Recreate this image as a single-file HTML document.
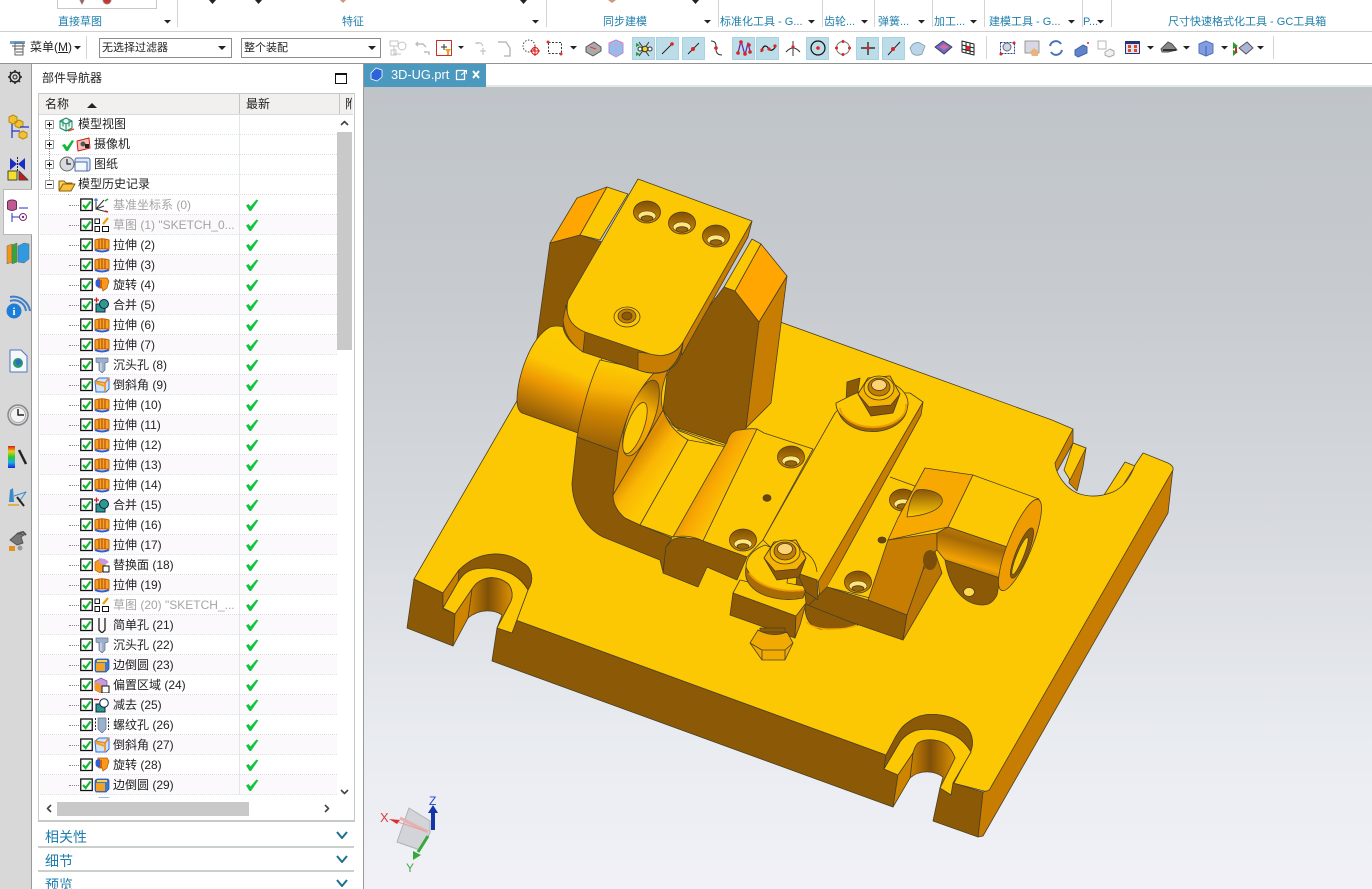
<!DOCTYPE html>
<html><head><meta charset="utf-8"><title>3D-UG</title>
<style>
html,body{margin:0;padding:0;background:#fff}
#p{position:relative;width:1372px;height:889px;overflow:hidden;background:#fff;font:12px "Liberation Sans","Noto Sans CJK SC",sans-serif;color:#222}
#p div,#p span{white-space:nowrap}
.a{position:absolute}
.l{position:absolute;top:15px;font-size:11px;line-height:15px;color:#1f7eab}
#cv{position:absolute;left:364px;top:87px;width:1008px;height:802px;background:linear-gradient(180deg,#bfc4c9 0,#c7cbcf 25%,#d7dade 55%,#e8ebf0 80%,#f1f1f7 100%)}
#lb{position:absolute;left:0;top:64px;width:31px;height:825px;background:#d8d8d8;border-right:1px solid #9a9a9a}
#tree{position:absolute;left:40px;top:195px;width:297px;height:603px;overflow:hidden}
.r{position:relative;height:19px;line-height:20px;border-bottom:1px dotted #e2d8e6;background:#fff}
.r:nth-child(even){background:#fbf9fb;border-bottom-color:#d9e8dc}
.r .c{position:absolute;left:40px;top:3px;width:13px;height:14px}
.r .i{position:absolute;left:54px;top:2px;width:16px;height:16px}
.r .k{position:absolute;left:205px;top:3px;width:14px;height:14px}
.r .d{position:absolute;left:29px;top:10px;width:10px;border-top:1px dotted #888}
.r span{position:absolute;left:73px;top:0}
.r .g{color:#a4a4a4}
.r .s{position:absolute;left:199px;top:0;bottom:-1px;border-left:1px solid #e4e8e4}
.bar{position:absolute;left:38px;width:316px;height:2px;background:#c9cfc9}
.h{position:absolute;left:45px;font-size:14px;line-height:20px;color:#1f7eab}
</style></head><body><div id="p">

<!-- ribbon row -->
<div class="a" style="left:57px;top:-1px;width:98px;height:8px;border:1px solid #c8c8c8"></div>
<div class="a" style="left:0;top:31px;width:1372px;height:1px;background:#cfcfcf"></div>
<div class="a" style="left:0;top:63px;width:1372px;height:1px;background:#8f9493"></div>
<span class="l" style="left:58px">直接草图</span>
<span class="l" style="left:342px">特征</span>
<span class="l" style="left:603px">同步建模</span>
<span class="l" style="left:720px">标准化工具 - G...</span>
<span class="l" style="left:824px">齿轮...</span>
<span class="l" style="left:878px">弹簧...</span>
<span class="l" style="left:934px">加工...</span>
<span class="l" style="left:989px">建模工具 - G...</span>
<span class="l" style="left:1083px">P...</span>
<span class="l" style="left:1168px">尺寸快速格式化工具 - GC工具箱</span>

<!-- second row -->
<span class="a" style="left:30px;top:39px;line-height:16px">菜单(<u>M</u>)</span>
<div class="a" style="left:99px;top:38px;width:131px;height:18px;border:1px solid #8d8d8d;font-size:11px;line-height:18px;text-indent:2px">无选择过滤器</div>
<div class="a" style="left:241px;top:38px;width:138px;height:18px;border:1px solid #8d8d8d;font-size:11px;line-height:18px;text-indent:2px">整个装配</div>

<!-- panel -->
<div id="lb"></div>
<div class="a" style="left:3px;top:189px;width:28px;height:44px;background:#fff;border:1px solid #b8b8b8;border-right:0"></div>
<div class="a" style="left:363px;top:64px;width:1px;height:825px;background:#9a9a9a"></div>
<span class="a" style="left:42px;top:71px;line-height:15px">部件导航器</span>
<div class="a" style="left:335px;top:73px;width:10px;height:8px;border:1px solid #111;border-top-width:2px"></div>

<div class="a" style="left:38px;top:93px;width:315px;height:726px;border:1px solid #c6cac6;border-bottom-width:2px;box-sizing:content-box"></div>
<div class="a" style="left:39px;top:94px;width:314px;height:20px;background:#f1f0ef;border-bottom:1px solid #d8dcd8;line-height:20px">
  <span class="a" style="left:6px">名称</span><span class="a" style="left:207px">最新</span><span class="a" style="left:306px;width:7px;overflow:hidden">附</span>
  <div class="a" style="left:200px;top:0;height:20px;border-left:1px solid #c6c6c6"></div>
  <div class="a" style="left:300px;top:0;height:20px;border-left:1px solid #c6c6c6"></div>
</div>
<div class="a" style="left:40px;top:114px;width:297px;height:80px;line-height:20px">
  <div class="a" style="left:0;top:0;width:297px;height:20px;border-bottom:1px dotted #d9e8dc"><span class="a" style="left:38px">模型视图</span></div>
  <div class="a" style="left:0;top:20px;width:297px;height:20px;border-bottom:1px dotted #e2d8e6"><span class="a" style="left:54px">摄像机</span></div>
  <div class="a" style="left:0;top:40px;width:297px;height:20px;border-bottom:1px dotted #d9e8dc"><span class="a" style="left:54px">图纸</span></div>
  <div class="a" style="left:0;top:60px;width:297px;height:20px;border-bottom:1px dotted #e2d8e6"><span class="a" style="left:38px">模型历史记录</span></div>
  <div class="a" style="left:199px;top:0;height:80px;border-left:1px solid #e4e8e4"></div>
</div>

<svg width="0" height="0" style="position:absolute"><defs>
<symbol id="c" viewBox="0 0 13 14"><rect x=".75" y="1" width="11.5" height="11.5" fill="#fff" stroke="#111" stroke-width="1.3"/><path d="M3 7l2.6 3L10.5 3.5" fill="none" stroke="#11bb33" stroke-width="2.2"/></symbol>
<symbol id="k" viewBox="0 0 14 14"><path d="M1 7.5l2.5-1.5 2 2.5L11.5 1.5l1.8 1L6 13H4.5z" fill="#14c43c"/></symbol>
<symbol id="x" viewBox="0 0 16 16"><path d="M1 3q7-2.500 14 0v9H1z" fill="#f7a21f" stroke="#c05a10"/><path d="M5 2.500V12M8 2V12M11 2.500V12" stroke="#a8470c" fill="none"/><path d="M1 13q7 3 14 0" stroke="#2f5fd0" stroke-width="2" fill="none"/></symbol>
<symbol id="v" viewBox="0 0 16 16"><path d="M4 1h9l2 3-2 7-4 3-1-3H5L2 8z" fill="#f79a1a" stroke="#b4530c" stroke-width=".7"/><path d="M2 3q-1 3 0 6 2 2 4 1V2z" fill="#2f5fd0"/><path d="M7 3v8" stroke="#c02010"/></symbol>
<symbol id="u" viewBox="0 0 16 16"><rect x="2" y="7" width="9" height="8" fill="#2d9a8e" stroke="#124"/><circle cx="10" cy="7" r="4.500" fill="#2d9a8e" stroke="#124"/><path d="M0 3h5M2.500 .5v5" stroke="#d01818" stroke-width="1.300"/></symbol>
<symbol id="sub" viewBox="0 0 16 16"><rect x="2" y="7" width="9" height="8" fill="#2d9a8e" stroke="#124"/><circle cx="10" cy="6" r="4.300" fill="#fff" stroke="#124"/><path d="M0 2.500h5" stroke="#d01818" stroke-width="1.300"/></symbol>
<symbol id="h" viewBox="0 0 16 16"><path d="M2 1h12v4l-3 1v7l-3 3-3-3V6L2 5z" fill="#9db0cc" stroke="#5c7090" stroke-width=".7"/><path d="M7 6v8" stroke="#e9eef6"/></symbol>
<symbol id="hs" viewBox="0 0 16 16"><path d="M5 1v12l3 3 3-3V1" fill="none" stroke="#222" stroke-width="1.300"/></symbol>
<symbol id="ht" viewBox="0 0 16 16"><path d="M4 1h8v11l-4 4-4-4z" fill="#9db0cc" stroke="#5c7090" stroke-width=".7"/><path d="M1.500 1v12M14.500 1v12" stroke="#222" stroke-dasharray="2 1.500"/></symbol>
<symbol id="a" viewBox="0 0 16 16"><path d="M1 4l4-3h10v11l-3 3H2z" fill="#cfe2fa" stroke="#2a70d8"/><path d="M1 4l10 2 4-5M11 6v9" stroke="#e8861a" stroke-width="1.500" fill="none"/><path d="M2 6l9 3" stroke="#f3a21e" stroke-width="2"/></symbol>
<symbol id="b" viewBox="0 0 16 16"><path d="M1 5q0-3 3-3h9q2 0 2 2v8l-3 3H2L1 13z" fill="#3a78d8" stroke="#1f4ea0" stroke-width=".7"/><path d="M2 6h9v8H2z" fill="#f7a21f"/><path d="M3 4h10" stroke="#f9d24f" stroke-width="2"/></symbol>
<symbol id="o" viewBox="0 0 16 16"><path d="M1 4l6-3 6 3v9l-6 3-6-3z" fill="#c79ae0" stroke="#7c4ba0" stroke-width=".7"/><path d="M1 5l6 3v8l-6-3z" fill="#f79a1a"/><rect x="8" y="9" width="7" height="7" fill="#fff" stroke="#111"/></symbol>
<symbol id="e" viewBox="0 0 16 16"><path d="M1 5l5-3 5 2v9l-5 3-5-3z" fill="#f79a1a" stroke="#b4530c" stroke-width=".7"/><path d="M5 1l6 1 4 3-4 3-6-2z" fill="#c79ae0"/><rect x="9" y="9" width="6" height="6" fill="#fff" stroke="#111"/></symbol>
<symbol id="sk" viewBox="0 0 16 16"><rect x="1" y="2" width="4.500" height="4.500" fill="#fff" stroke="#111"/><rect x="1" y="9.500" width="4.500" height="5" fill="#fff" stroke="#111"/><rect x="8.500" y="9.500" width="6" height="5" fill="#fff" stroke="#111"/><path d="M9 7l5-6" stroke="#e8a010" stroke-width="2.200"/></symbol>
<symbol id="ds" viewBox="0 0 16 16"><path d="M2 3v9l8-3M2 12l11 3M2 12l8-9" fill="none" stroke="#333"/><path d="M2 1v4M0 3h4" stroke="#2255cc"/><path d="M11 4l3-2" stroke="#22a040" stroke-width="1.500"/><path d="M11 14l3 1" stroke="#d02020" stroke-width="1.500"/></symbol>
<linearGradient id="gC" gradientUnits="userSpaceOnUse" x1="578" y1="345" x2="546" y2="425"><stop offset="0" stop-color="#fccb02"/><stop offset=".32" stop-color="#fcc603"/><stop offset=".55" stop-color="#ee9a02"/><stop offset="1" stop-color="#8a5808"/></linearGradient>
<linearGradient id="gD" gradientUnits="userSpaceOnUse" x1="610" y1="365" x2="597" y2="445"><stop offset="0" stop-color="#fcca02"/><stop offset=".3" stop-color="#f8b204"/><stop offset=".6" stop-color="#cf8400"/><stop offset="1" stop-color="#9a6206"/></linearGradient>
<linearGradient id="gF" gradientUnits="userSpaceOnUse" x1="625" y1="440" x2="668" y2="472"><stop offset="0" stop-color="#f7a802"/><stop offset=".35" stop-color="#dc8c02"/><stop offset=".65" stop-color="#fab504"/><stop offset="1" stop-color="#fcc803"/></linearGradient>
<linearGradient id="gR" gradientUnits="userSpaceOnUse" x1="695" y1="475" x2="733" y2="497"><stop offset="0" stop-color="#d98a02"/><stop offset=".45" stop-color="#f9a803"/><stop offset="1" stop-color="#fcc803"/></linearGradient>
<linearGradient id="gS" x1="0" x2="1" y1="0" y2="0"><stop offset="0" stop-color="#cf8400"/><stop offset=".45" stop-color="#7f5008"/><stop offset="1" stop-color="#dd8f02"/></linearGradient>
<linearGradient id="gH" x1="0" x2="0" y1="0" y2="1"><stop offset="0" stop-color="#7d5008"/><stop offset="1" stop-color="#d68c00"/></linearGradient>
<linearGradient id="gY" gradientUnits="userSpaceOnUse" x1="985" y1="520" x2="970" y2="575"><stop offset="0" stop-color="#de8e02"/><stop offset=".45" stop-color="#a56a06"/><stop offset=".8" stop-color="#f2a203"/><stop offset="1" stop-color="#b57304"/></linearGradient>
<linearGradient id="gB" gradientUnits="userSpaceOnUse" x1="650" y1="378" x2="632" y2="455"><stop offset="0" stop-color="#8f5c06"/><stop offset=".4" stop-color="#f7ae02"/><stop offset="1" stop-color="#e69803"/></linearGradient>
<linearGradient id="gN" gradientUnits="userSpaceOnUse" x1="925" y1="490" x2="925" y2="516"><stop offset="0" stop-color="#8a5808"/><stop offset="1" stop-color="#fcc603"/></linearGradient>
<g id="hole"><ellipse rx="13.500" ry="11" fill="url(#gH)" stroke="#4a3a1e"/><ellipse cy="4" rx="9" ry="5" fill="#fde67a" stroke="#4a3a1e" stroke-width=".6"/><ellipse cy="6.500" rx="6" ry="2.800" fill="#9a6408"/></g>
<g id="nut"><path d="M-20,3 L-10,-13 L12,-15 L22,3 L15,22 L-7,25Z" fill="#8a5808" stroke="#4a3a1e"/><path d="M-20,3 L-10,-13 L12,-15 L22,3 L13,14 L-9,16Z" fill="#f5b202" stroke="#4a3a1e"/><ellipse cx="1" cy="-3" rx="15" ry="12" fill="#f8c002" stroke="#4a3a1e"/><ellipse cx="1" cy="-4" rx="11" ry="9" fill="#c27c04" stroke="#4a3a1e"/><ellipse cx="1" cy="-6" rx="7.500" ry="5.500" fill="#fdd272"/></g>
</defs></svg>

<div id="cv"></div>

<!-- tab -->
<div class="a" style="left:364px;top:64px;width:122px;height:23px;background:#4b99bf"></div>
<span class="a" style="left:391px;top:67px;color:#fff;line-height:15px;font-size:12.800px">3D-UG.prt</span>
<div class="a" style="left:486px;top:85px;width:886px;height:2px;background:#e4e7e7"></div>

<!-- graphics -->
<svg class="a" style="left:0;top:0" width="1372" height="889" viewBox="0 0 1372 889" stroke-linejoin="round">
<!-- ribbon separators -->
<g stroke="#d4d4d4"><path d="M177.500 0V27M546.500 0V27M718.500 0V27M822.500 0V27M874.500 0V27M932.500 0V27M984.500 0V27M1082.500 0V27M1111.500 0V27M86.500 36V59M986.500 36V59M1273.500 36V59"/></g>
<g fill="#222"><path d="M164 20h7l-3.500 3.500zM532 20h7l-3.500 3.500zM704 20h7l-3.500 3.500zM808 20h7l-3.500 3.500zM861 20h7l-3.500 3.500zM918 20h7l-3.500 3.500zM970 20h7l-3.500 3.500zM1068 20h7l-3.500 3.500zM1097 20h7l-3.500 3.500zM209 0h7l-3.500 4zM255 0h7l-3.500 4zM520 0h7l-3.500 4zM692 0h7l-3.500 4z"/>
<path d="M74 46h7l-3.500 3.500zM218 46h8l-4 4zM368 46h8l-4 4zM458 46h6l-3 3zM570 46h7l-3.500 3.500zM1147 46h7l-3.500 3.500zM1183 46h7l-3.500 3.500zM1221 46h7l-3.500 3.500zM1257 46h7l-3.500 3.500z"/></g>
<path d="M80 0h4l-2 4zM103 0a4 4 0 0 0 8 0" fill="#c33" stroke="#888"/>
<path d="M340 0h6l-3 3zM608 0h8l-4 3z" fill="#c97"/>

<!-- menu icon -->
<g transform="translate(10,41)"><rect x="0" y="0" width="15" height="3" fill="#6fa3cf"/><path d="M2 5h13M4 8h9M6 11h7" stroke="#555"/><rect x="5" y="2" width="8" height="12" fill="none" stroke="#666"/></g>
<!-- toolbar icons -->
<g fill="none" stroke="#c4c4c4"><circle cx="402" cy="46" r="4"/><path d="M390 41h8v5h-8zM394 46v8h7"/><rect x="391" y="50" width="5" height="5"/></g>
<g fill="none" stroke="#bdbdbd" stroke-width="1.500"><path d="M416 44h7l3 3M424 52h5v3M418 42l-2 2 2 2"/></g>
<rect x="436.500" y="40.500" width="15" height="15" fill="#fff" stroke="#c9302c"/><path d="M444 44v6M441 47h6" stroke="#333"/><path d="M445 49h6l-2 3v3h-2v-3z" fill="#e8a51c"/>
<g fill="none" stroke="#bbb"><path d="M475 43h6l2 3M480 51h6M483 48v7M479 42l-2 2"/><path d="M498 42h8l4 6v8h-6" stroke-width="1.500"/></g>
<circle cx="529" cy="46" r="6" fill="none" stroke="#444" stroke-dasharray="1.500 1.500"/><circle cx="535" cy="51" r="3.500" fill="none" stroke="#d11"/><path d="M535 46v10M530 51h10" stroke="#d11"/>
<rect x="548.500" y="42.500" width="13" height="11" fill="none" stroke="#333" stroke-dasharray="2 1.500"/><circle cx="548" cy="42" r="1.500" fill="#d33"/><circle cx="561" cy="54" r="1.500" fill="#d33"/>
<path d="M586 47l8-5 7 5v4l-8 5-7-4z" fill="#aaa" stroke="#555"/><path d="M590 47l6 2" stroke="#e33"/>
<path d="M609 43l7-3 7 3v10l-7 4-7-4z" fill="#8ebfee" stroke="#c28abf"/><path d="M609 43l7 3 7-3M616 46v11" stroke="#e29ac8" fill="none"/>
<g fill="#bcdde8" stroke="#a8d3e2"><rect x="632.500" y="37.500" width="22" height="22"/><rect x="656.500" y="37.500" width="22" height="22"/><rect x="682.500" y="37.500" width="22" height="22"/><rect x="732.500" y="37.500" width="22" height="22"/><rect x="756.500" y="37.500" width="22" height="22"/><rect x="806.500" y="37.500" width="22" height="22"/><rect x="856.500" y="37.500" width="22" height="22"/><rect x="882.500" y="37.500" width="22" height="22"/></g>
<path d="M639 42l5 7 5-7M639 56l5-7 5 7" fill="none" stroke="#333"/><circle cx="645" cy="49" r="2.800" fill="#f4d21e" stroke="#333"/><circle cx="640" cy="49" r="2" fill="#fff" stroke="#333"/><circle cx="650" cy="49" r="2" fill="#fff" stroke="#333"/><path d="M636 43l4 2-4 2zM636 52l4 2-4 2z" fill="#1aa331"/>
<path d="M662 54l11-11" stroke="#222"/><circle cx="672" cy="44" r="1.800" fill="#d22"/>
<path d="M688 54l11-11" stroke="#222"/><circle cx="693" cy="49" r="2" fill="#d22"/>
<path d="M711 41q5 0 5 5v3q0 6 6 6" fill="none" stroke="#333"/><circle cx="716" cy="48" r="1.800" fill="#d22"/>
<path d="M738 53l3-12 4 14 3-12 2 8" fill="none" stroke="#6a2a9a" stroke-width="1.300"/><g fill="#d22"><circle cx="738" cy="53" r="1.800"/><circle cx="741" cy="42" r="1.800"/><circle cx="745" cy="54" r="1.800"/><circle cx="749" cy="45" r="1.800"/><circle cx="750" cy="52" r="1.800"/></g>
<path d="M761 52c3-9 6-6 8-3s6 0 7-4" fill="none" stroke="#111" stroke-width="1.200"/><g fill="#d22"><circle cx="762" cy="50" r="1.600"/><circle cx="769" cy="49" r="1.600"/><circle cx="775" cy="46" r="1.600"/></g>
<path d="M786 52q7-8 14 0M793 41v15" fill="none" stroke="#333"/><circle cx="793" cy="47" r="1.600" fill="#d22"/>
<circle cx="818" cy="48" r="7" fill="none" stroke="#111" stroke-width="1.200"/><circle cx="818" cy="48" r="1.800" fill="#d22"/>
<circle cx="843" cy="48" r="6.500" fill="none" stroke="#777"/><g fill="#d22"><circle cx="843" cy="41.500" r="1.500"/><circle cx="849.500" cy="48" r="1.500"/><circle cx="843" cy="54.500" r="1.500"/><circle cx="836.500" cy="48" r="1.500"/></g>
<path d="M868 42v13M861 48h14" stroke="#111" stroke-width="1.200"/><circle cx="868" cy="48" r="1.800" fill="#d22"/>
<path d="M888 55l12-13" stroke="#222"/><circle cx="893" cy="49" r="2" fill="#d22"/>
<path d="M910 48q4-7 10-5l5 3-3 8q-6 3-10-1z" fill="#bcd3ec" stroke="#8aa"/>
<path d="M935 47l8-6 9 6-8 7z" fill="#6a6bd0" stroke="#444"/><path d="M939 47l5-3 5 3-5 3z" fill="#d86a9a"/>
<path d="M962 41l12 3v11l-12-3zM966 42v11M970 43v11M962 45l12 3M962 49l12 3" fill="none" stroke="#222"/><circle cx="968" cy="48" r="2" fill="#d22"/>
<rect x="1000.500" y="42.500" width="14" height="11" fill="none" stroke="#223fb0" stroke-dasharray="2 1"/><circle cx="1007" cy="47" r="4" fill="#cfd6e4" stroke="#666"/><circle cx="1014" cy="43" r="1.500" fill="#d22"/><circle cx="1001" cy="54" r="1.500" fill="#d22"/>
<rect x="1025" y="41" width="14" height="12" fill="#d8d8e4" stroke="#999"/><path d="M1034 48l4 3v5h-6l-2-4z" fill="#e8b47c"/>
<path d="M1050 46a6 6 0 0 1 11-2M1062 50a6 6 0 0 1-11 2" fill="none" stroke="#4b72b8" stroke-width="2"/>
<path d="M1075 50l8-5 4 2v6l-9 4-3-2z" fill="#5e83cc" stroke="#4565a5"/><circle cx="1088" cy="43" r="1" fill="#d22"/>
<rect x="1098" y="41" width="8" height="8" fill="#fff" stroke="#b4b4b4"/><path d="M1105 52l5-3 4 2v4l-5 2-4-2z" fill="#f0f0f0" stroke="#aaa"/>
<rect x="1125.500" y="41.500" width="14" height="12" fill="#e0e4ee" stroke="#25337a"/><rect x="1126" y="42" width="13" height="2" fill="#25337a"/><g fill="#d84a2a"><rect x="1128" y="45" width="3" height="3"/><rect x="1134" y="45" width="3" height="3"/><rect x="1128" y="49" width="3" height="3"/><rect x="1134" y="49" width="3" height="3"/></g>
<path d="M1161 49l7-7 4 2 5 6-9 2-6 0z" fill="#888" stroke="#555"/><path d="M1163 50h13" stroke="#333" stroke-width="2"/>
<path d="M1199 44l7-3 7 3v9l-7 3-7-3z" fill="#7f9de0" stroke="#5a70b8"/><path d="M1206 46v10" stroke="#4a5fa8"/>
<path d="M1239 48l8-6 6 6-7 6z" fill="#aab6d6" stroke="#555"/><path d="M1233 42l5 4-5 3zM1233 50l5 2-5 4z" fill="#1aa331"/><path d="M1236 47v6" stroke="#d22" stroke-width="2"/>
<!-- tab icons -->
<path d="M371 73l5-5 6 2v7l-5 4-6-2z" fill="#2a64d8" stroke="#fff" stroke-width=".8"/>
<path d="M456.500 70.500h8v9h-8z" fill="none" stroke="#fff" stroke-width="1.300"/><path d="M461 75l5-4M463 70.500h3.500V74" stroke="#fff" fill="none"/>
<path d="M473 71l6 7M479 71l-6 7" stroke="#fff" stroke-width="2"/>
<!-- left bar icons -->
<g transform="translate(15,77)"><circle r="5" fill="none" stroke="#222" stroke-width="1.500"/><circle r="2" fill="none" stroke="#222"/><path d="M0-7v2M0 5v2M-7 0h2M5 0h2M-5-5l1.500 1.500M5-5l-1.500 1.500M-5 5l1.500-1.500M5 5l-1.500-1.500" stroke="#222" stroke-width="1.500"/></g>
<g><path d="M9 117l4-2 4 2v5l-4 2-4-2zM15 122l4-2 4 2v4l-4 2-4-2z" fill="#f1c232" stroke="#b98a10"/><path d="M12 124v14M12 131h8M20 127h9" stroke="#2233cc" stroke-width="1.200"/><path d="M19 133l4-2 4 2v4l-4 2-4-2z" fill="#f1c232" stroke="#b98a10"/></g>
<g><path d="M10 158l7 6-7 6zM25 158l-7 6 7 6z" fill="#1a2fc0"/><path d="M17.500 157v15" stroke="#222" stroke-dasharray="2 1"/><rect x="8" y="171" width="9" height="9" fill="#f4e02a" stroke="#444"/><path d="M19 171l9 9h-9z" fill="#cc1c10" stroke="#444"/></g>
<g><ellipse cx="12" cy="202" rx="4.500" ry="2" fill="#c05a90" stroke="#6a2a5a"/><path d="M7.500 202v7q4.500 3 9 0v-7" fill="#c05a90" stroke="#6a2a5a"/><path d="M19 208h9M12 213v9M12 217h7" stroke="#2233cc"/><circle cx="23" cy="217" r="3.500" fill="none" stroke="#7a2a7a"/><circle cx="23" cy="217" r="1.200" fill="#7a2a7a"/></g>
<g stroke="#666" stroke-width=".5"><path d="M7 246l5-2v18l-5 2z" fill="#f39419"/><path d="M12 245l5-2v19l-5 2z" fill="#37a53a"/><path d="M18 246l6-3 5 1v15l-5 4-6-1z" fill="#2f9ae0"/></g>
<g><circle cx="14" cy="311" r="7.500" fill="#1d7ed8"/><text x="14" y="315" text-anchor="middle" font-size="11" font-weight="bold" font-family="Liberation Serif,serif" fill="#fff">i</text><path d="M10 301a12 12 0 0 1 16 10M10 297a17 17 0 0 1 20 14" fill="none" stroke="#3d7fc8" stroke-width="2"/></g>
<g><path d="M10 350h11l6 6v16H10z" fill="#f4f7fc" stroke="#4a78c0"/><circle cx="18" cy="363" r="5" fill="#2a9a6a"/><path d="M15 361l4-2 3 3-4 4z" fill="#2f6bc0"/></g>
<g><circle cx="18" cy="415" r="10" fill="#d6d9de" stroke="#888" stroke-width="1.500"/><circle cx="18" cy="415" r="7.500" fill="#f4f4f6" stroke="#aaa"/><path d="M18 409v6h6" fill="none" stroke="#222" stroke-width="1.500"/></g>
<defs><linearGradient id="rb" x1="0" y1="0" x2="0" y2="1"><stop offset="0" stop-color="#e01818"/><stop offset=".25" stop-color="#e8d018"/><stop offset=".5" stop-color="#28c838"/><stop offset=".75" stop-color="#18b0e0"/><stop offset="1" stop-color="#1828d8"/></linearGradient></defs>
<rect x="8" y="446" width="7" height="22" fill="url(#rb)"/><path d="M19 450l7 14" stroke="#222" stroke-width="2.500"/>
<path d="M10 490l3-2 1 14h-5z" fill="#3a8ac8"/><path d="M14 496l12-4-7 10" fill="none" stroke="#3a8ac8"/><path d="M17 497l7 9" stroke="#222" stroke-width="2"/><path d="M8 505h11" stroke="#e8a020" stroke-width="1.500"/>
<g><path d="M10 540l8-7 6 2-3 2 2 6-6 2z" fill="#777" stroke="#555"/><path d="M17 534l6-2 3 3" fill="none" stroke="#555" stroke-width="2"/><rect x="9" y="546" width="6" height="5" fill="#e69020"/><circle cx="20" cy="548" r="2.500" fill="#999"/></g>

<!-- tree head shapes -->
<path d="M87 108l5-5 5 5z" fill="#222"/>
<g stroke="#888" stroke-dasharray="1 1"><path d="M49.500 125V184M68.500 194V798"/></g>
<g fill="#fff" stroke="#9a9a9a"><rect x="45.500" y="120.500" width="8" height="8"/><rect x="45.500" y="140.500" width="8" height="8"/><rect x="45.500" y="160.500" width="8" height="8"/><rect x="45.500" y="180.500" width="8" height="8"/></g>
<path d="M47 124.500h5M49.500 122v5M47 144.500h5M49.500 142v5M47 164.500h5M49.500 162v5M47 184.500h5" stroke="#111"/>
<path d="M60 121l6-3 6 3v7l-6 3-6-3zM60 121l6 3 6-3M66 124v7M63 119.500v7M69 119.500v7" fill="#e9f7ef" stroke="#16866a"/><path d="M68 131l6-2" stroke="#e0401a" stroke-width="1.300"/>
<path d="M62 145l3-1 2 3 5-7 2 1-6 10h-2z" fill="#14b83a"/>
<path d="M77 141l12-3 1 10-12 3z" fill="#f6c0b8" stroke="#d01818"/><circle cx="83" cy="144" r="2.500" fill="#555"/><rect x="85" y="144" width="4" height="4" fill="#222"/>
<circle cx="67" cy="164" r="7" fill="#d8dbe0" stroke="#666"/><path d="M67 159v5h4" stroke="#222" fill="none" stroke-width="1.200"/>
<rect x="75" y="158" width="15" height="13" rx="2" fill="#dde8f8" stroke="#4a68a8"/><rect x="75" y="162" width="12" height="9" fill="#f4f7fc" stroke="#4a68a8"/>
<path d="M59 190v-9h5l2 2h6v2" fill="#ffd35a" stroke="#8a6010"/><path d="M59 191l4-7h12l-4 7z" fill="#f7c23a" stroke="#8a6010"/>

<!-- ================= MODEL ================= -->
<g stroke="#4a3f26" stroke-width=".8">
<!-- plate walls -->
<path d="M1173,468 L1168,513 L983,836 L978,837 L983,792 L989,790Z" fill="#c67d02"/>
<path d="M497,628 L512,633 L513,619 L886,755 L884,769 L898,775 L893,807 L492,661Z" fill="#8c5a07"/>
<path d="M414,579 L443,593 L443,609 L455,614 L453,646 L407,628Z" fill="#8c5a07"/>
<path d="M940,788 L951,795 L953,783 L983,792 L978,837 L933,821Z" fill="#8c5a07"/>
<path d="M1073,429 L1073,443 L1055,475 L1055,463Z" fill="#c67d02"/>
<path d="M1086,448 L1083,467 L1077,491 L1069,483 L1073,443Z" fill="#c67d02"/>
<path d="M1073,443 L1086,448 L1070,480 L1064,470Z" fill="#fcc803"/>
<path d="M1125,462 L1135,466 L1120,490 L1104,495Z" fill="#fcc803"/>
<!-- top face -->
<path d="M414,579 L600,257 L1052,420 L1073,429 L1055,463 C1056,475 1066,488 1077,493 C1090,498 1103,496 1113,492 C1124,487 1131,476 1135,465 L1143,453 L1168,463 Q1174,466 1173,470 L991,787 Q989,792 984,791 L953,783 L970,753 C975,743 972,730 963,724 C950,714 925,710 910,721 C902,726 899,731 895,738 L886,755 L513,619 L529,588 C535,578 530,566 523,563 C507,551 480,549 459,570 L443,593Z" fill="#fcc803"/>
<!-- slot 1 -->
<path d="M443,593 L459,570 C480,549 507,551 523,563 C530,566 535,578 529,588 L513,619 L512,633 L528,590 C520,577 510,570 488,568 C470,568 464,572 458,582 L443,608Z" fill="#8c5a07"/>
<path d="M443,593 L443,608 L458,582 L459,570Z" fill="#c67d02"/>
<path d="M443,608 L458,582 C464,572 470,568 488,568 C510,570 520,577 528,590 L512,633 L497,628 L510,603 C515,594 510,585 507,583 C498,576 488,577 482,580 C477,582 475,585 472,589 L455,614Z" fill="#fcc803"/>
<path d="M472,589 C475,585 477,582 482,580 C488,577 498,576 507,583 C510,585 515,594 510,603 L497,628 L502,615 C495,610 480,608 468,618 L472,589Z" fill="url(#gS)"/>
<path d="M455,614 L472,589 L468,618 L453,646Z" fill="#cf8400"/>
<!-- slot 2 -->
<path d="M886,755 L895,738 C899,731 902,726 910,721 C925,710 950,714 963,724 C972,730 975,743 970,753 L954,783 L953,783 L971,752 C965,742 958,736 948,733 C935,728 918,728 910,733 C905,736 902,739 900,742 L884,769Z" fill="#8c5a07"/>
<path d="M884,769 L900,742 C902,739 905,736 910,733 C918,728 935,728 948,733 C958,736 965,742 971,752 L953,783 L951,795 L940,788 L955,758 C952,750 949,747 947,745 C940,739 925,738 918,743 C915,746 914,750 913,753 L898,775Z" fill="#fcc803"/>
<path d="M913,753 C914,750 915,746 918,743 C925,738 940,739 947,745 C949,747 952,750 955,758 L940,788 L943,777 C935,771 920,769 910,778Z" fill="url(#gS)"/>
<path d="M898,775 L913,753 L910,778 L893,807Z" fill="#cf8400"/>
<!-- tower -->
<path d="M550,243 L580,235 L602,242 L563,330 L536,345Z" fill="#8c5a07"/>
<path d="M550,243 L577,198 L607,187 L580,235Z" fill="#ffa602"/>
<path d="M607,187 L628,194 L600,240 L580,235Z" fill="#fcc803"/>
<path d="M787,276 L771,403 L746,428 L759,322Z" fill="#c67d02"/>
<path d="M684,340 L724,287 L735,291 L759,322 L746,428 L727,444 L690,432 L675,427 L663,410 L667,375Z" fill="#8c5a07"/>
<path d="M752,239 L761,244 L735,291 L724,287Z" fill="#fcc803"/>
<path d="M761,244 L787,276 L759,322 L735,291Z" fill="#ffa602"/>
<!-- cylinder -->
<path d="M550,327 C530,338 517,378 517,400 Q517,410 522,413 L578,433 L604,352 L570,330 Q560,324 550,327Z" fill="url(#gC)"/>
<!-- dark curved wall -->
<path d="M577,437 L618,452 L613,495 Q613,508 625,518 L640,525 L672,538 L666,547 L663,572 L660,560 L603,537 C585,528 572,505 572,483Z" fill="#8c5a07"/>
<!-- floor strip under tower -->
<path d="M663,410 Q668,424 680,430 L727,446 L722,452 L688,440 Q670,430 663,410Z" fill="#fcc803"/>
<path d="M677,430 L723,448" fill="none"/>
<!-- fillet -->
<path d="M613,495 Q613,508 625,518 L640,525 L688,440 Q670,430 663,410Z" fill="url(#gF)"/>
<path d="M688,440 L727,447 L673,537 L640,525Z" fill="#fcc803"/>
<!-- arm disc with hole -->
<path d="M600,360 L655,372 C632,395 622,430 618,452 L577,437 C582,410 590,380 600,360Z" fill="url(#gD)"/>
<path d="M618,452 L613,495 L663,410 Q658,395 668,370 L655,372 C632,395 622,430 618,452Z" fill="#d68a02"/>
<ellipse cx="641" cy="418" rx="13" ry="40" transform="rotate(20 641 418)" fill="url(#gB)"/>
<ellipse cx="635" cy="428" rx="8.500" ry="27" transform="rotate(20 635 428)" fill="#fcc803"/>
<!-- half-round -->
<path d="M740,430 Q730,430 727,442 L673,537 Q690,534 703,541 L757,429 Q750,428 740,430Z" fill="url(#gR)"/>
<path d="M757,429 L764,433 L813,449 L763,540 L747,557 L703,541Z" fill="#fcc803"/>
<use href="#hole" x="791" y="457"/>
<use href="#hole" x="743" y="540"/>
<ellipse cx="767" cy="498" rx="4" ry="3.300" fill="#6a4408"/>
<!-- front block -->
<path d="M672,540 Q680,536 687,538 Q697,538 703,541 L747,557 L737,580 L707,567 L698,587 L663,573 L666,547Z" fill="#8c5a07"/>
<!-- long bar -->
<path d="M923,402 L921,415 L820,600 L818,580Z" fill="#c67d02"/>
<path d="M763,540 L835,413 L855,392 L910,393 L923,402 L818,582 L800,575Z" fill="#fcc803"/>
<!-- right plate -->
<path d="M890,477 L915,485 L890,540 L870,598 L827,587Z" fill="#fcc803" stroke="none"/>
<path d="M890,477 L915,486M827,587 L870,598" fill="none"/>
<use href="#hole" x="903" y="500"/>
<use href="#hole" x="858" y="582"/>
<ellipse cx="882" cy="540" rx="4" ry="3" fill="#6a4408"/>
<path d="M797,573 L817,580 L818,600 L807,607 L795,600Z" fill="#8c5a07"/>
<path d="M807,607 L827,587 L868,600 L907,615 L903,640Z" fill="#8c5a07"/>
<!-- disc under -->
<path d="M805,604 Q804,625 820,629 Q845,630 858,625Z" fill="#8c5a07"/>
<path d="M806,622 Q815,630 835,629 Q848,629 857,625" fill="none" stroke="#f2a902" stroke-width="1.500"/>
<!-- right block -->
<path d="M888,540 L937,533 L937,550 Q925,558 923,570 L907,615 L868,600Z" fill="#c67d02"/>
<path d="M907,615 L903,640 L942,573 L935,552 L923,570Z" fill="#b87404"/>
<ellipse cx="930" cy="560" rx="7" ry="10" fill="#7a4e08" stroke="none"/>
<path d="M925,468 L973,475 L948,527 L888,540 L898,518Z" fill="#f7a902"/>
<path d="M907,517 Q910,495 917,490 C925,488 945,492 942,503 C938,512 920,516 907,517Z" fill="url(#gN)"/>
<path d="M973,475 L1039,499 L1010,548 L948,527Z" fill="#fcc803"/>
<path d="M948,527 L1010,548 L1000,578 L945,560 L937,550 L937,533Z" fill="url(#gY)"/>
<path d="M945,560 L1000,578 L997,595 Q992,605 983,605 C965,605 950,590 945,560Z" fill="#8c5a07"/>
<ellipse cx="969" cy="592" rx="5.500" ry="4.500" fill="#fcd84a"/>
<ellipse cx="1020" cy="545" rx="12" ry="49" transform="rotate(22 1020 545)" fill="#ee9c02"/>
<ellipse cx="1022" cy="553" rx="6" ry="27" transform="rotate(22 1022 553)" fill="#8a5808"/>
<ellipse cx="1020" cy="556" rx="3.500" ry="20" transform="rotate(22 1020 556)" fill="#fcc803"/>
<!-- lower clamp -->
<path d="M733,593 L730,615 L795,638 L796,616Z" fill="#8c5a07"/>
<path d="M796,616 L806,603 L800,625 L795,638Z" fill="#c67d02"/>
<path d="M740,580 L733,593 L796,616 L806,603 L805,595Z" fill="#fcc803"/>
<path d="M746,567 Q744,578 750,585 C760,598 785,602 803,598 L806,590 C785,595 755,588 746,567Z" fill="#a86c06"/>
<path d="M746,567 C755,588 785,595 806,590 L803,586 L787,583 L790,555 L765,545 C752,550 746,558 746,567Z" fill="#fcc803"/>
<path d="M749,573 C760,588 785,593 804,590" fill="none" stroke="#ef9c02" stroke-width="2"/>
<path d="M800,550 Q815,555 817,572" fill="none"/>
<path d="M797,573 L817,580 L818,600 L806,592Z" fill="#8c5a07"/>
<use href="#nut" x="784" y="555"/>
<!-- lower nut -->
<path d="M760,628 L785,628 L785,642 L760,642Z" fill="#8c5a07"/>
<path d="M762,632h22M762,637h22" fill="none"/>
<path d="M750,643 L758,630 Q772,638 787,632 L793,643 L785,660 L762,660Z" fill="#f0aa02"/>
<path d="M750,643 L762,650 L785,650 L793,643M762,650V660M785,650V660" fill="none"/>
<!-- upper washer / nut -->
<path d="M847,382 L860,378 L857,398 L846,402Z" fill="#8c5a07"/>
<path d="M836,403 L838,410 A35,26 0 0 0 907,410 L908,403 A36,24 0 0 1 836,403Z" fill="#9a6206"/>
<path d="M836,403 A36,24 0 0 0 908,403 A36,24 0 0 0 885,381 L852,395 Z" fill="#fcc803"/>
<path d="M840,408 A33,21 0 0 0 906,404" fill="none" stroke="#ef9c02" stroke-width="2"/>
<use href="#nut" x="878" y="391"/>
<!-- bracket plate -->
<path d="M752,221 L748,237 L682,355 L680,345Z" fill="#c67d02"/>
<path d="M566,305 L563,327 Q565,340 583,352 L638,370 Q660,378 673,367 Q682,360 683,342 L650,350 L585,330Z" fill="#8c5a07"/>
<path d="M563,320 Q565,340 583,352 L585,332 Q568,325 566,305Z" fill="#cf8400"/>
<path d="M638,370 Q655,376 668,370 Q680,360 683,342 Q675,356 660,355 L638,352Z" fill="#c67d02"/>
<path d="M638,179 L752,221 L683,342 Q672,360 650,354 L585,332 Q563,323 568,300Z" fill="#fcc803"/>
<use href="#hole" x="647" y="212"/>
<use href="#hole" x="682" y="223"/>
<use href="#hole" x="716" y="236"/>
<ellipse cx="627" cy="317" rx="13" ry="10" fill="#fcc803"/>
<ellipse cx="627" cy="316" rx="9" ry="7" fill="#c67d02"/>
<ellipse cx="627" cy="316" rx="5" ry="4" fill="#8c5a07"/>
</g>
<path d="M397,842 L409,808 L430,821 L430,833 L420,850Z" fill="#c8cbcf" fill-opacity=".75" stroke="#aeb2b6"/>
<path d="M400,818 L428,832" stroke="#e8b0b0" stroke-width="3"/>
<path d="M389,819 L397,824 L400,820Z" fill="#d83030"/><path d="M398,822 L425,831" stroke="#e0a0a0"/>
<path d="M431,830 L435,830 L435,812 L431,812Z" fill="#1434a8"/><path d="M428,813 L433,805 L438,813Z" fill="#1434a8"/>
<path d="M428,836 L418,852" stroke="#39a83c" stroke-width="3"/><path d="M413,860 L413,851 L421,855Z" fill="#39a83c"/>
<text x="380" y="822" font-size="13" fill="#d84040" font-family="Liberation Sans,sans-serif">X</text>
<text x="429" y="805" font-size="12" fill="#2244cc" font-family="Liberation Sans,sans-serif">Z</text>
<text x="406" y="872" font-size="12" fill="#44aa44" font-family="Liberation Sans,sans-serif">Y</text>
<!-- scrollbars -->
<rect x="337" y="132" width="15" height="218" fill="#c9c9c9"/>
<path d="M341 125l3.500-3.500 3.500 3.500M341 790l3.500 3.500 3.500-3.500M51 805l-3.500 3.500 3.500 3.500M325 805l3.500 3.500-3.500 3.500" fill="none" stroke="#444" stroke-width="1.600"/>
<rect x="57" y="802" width="192" height="14" fill="#c9c9c9"/>
<g fill="none" stroke="#1d6f8f" stroke-width="2"><path d="M337 832l5 6 5-6M337 856l5 6 5-6M337 880l5 6 5-6"/></g>
</svg>

<!-- tree rows -->
<div id="tree">
<div class="r"><i class="d"></i><svg class="c"><use href="#c"/></svg><svg class="i"><use href="#ds"/></svg><span class="g">基准坐标系 (0)</span><i class="s"></i><svg class="k"><use href="#k"/></svg></div>
<div class="r"><i class="d"></i><svg class="c"><use href="#c"/></svg><svg class="i"><use href="#sk"/></svg><span class="g">草图 (1) "SKETCH_0...</span><i class="s"></i><svg class="k"><use href="#k"/></svg></div>
<div class="r"><i class="d"></i><svg class="c"><use href="#c"/></svg><svg class="i"><use href="#x"/></svg><span>拉伸 (2)</span><i class="s"></i><svg class="k"><use href="#k"/></svg></div>
<div class="r"><i class="d"></i><svg class="c"><use href="#c"/></svg><svg class="i"><use href="#x"/></svg><span>拉伸 (3)</span><i class="s"></i><svg class="k"><use href="#k"/></svg></div>
<div class="r"><i class="d"></i><svg class="c"><use href="#c"/></svg><svg class="i"><use href="#v"/></svg><span>旋转 (4)</span><i class="s"></i><svg class="k"><use href="#k"/></svg></div>
<div class="r"><i class="d"></i><svg class="c"><use href="#c"/></svg><svg class="i"><use href="#u"/></svg><span>合并 (5)</span><i class="s"></i><svg class="k"><use href="#k"/></svg></div>
<div class="r"><i class="d"></i><svg class="c"><use href="#c"/></svg><svg class="i"><use href="#x"/></svg><span>拉伸 (6)</span><i class="s"></i><svg class="k"><use href="#k"/></svg></div>
<div class="r"><i class="d"></i><svg class="c"><use href="#c"/></svg><svg class="i"><use href="#x"/></svg><span>拉伸 (7)</span><i class="s"></i><svg class="k"><use href="#k"/></svg></div>
<div class="r"><i class="d"></i><svg class="c"><use href="#c"/></svg><svg class="i"><use href="#h"/></svg><span>沉头孔 (8)</span><i class="s"></i><svg class="k"><use href="#k"/></svg></div>
<div class="r"><i class="d"></i><svg class="c"><use href="#c"/></svg><svg class="i"><use href="#a"/></svg><span>倒斜角 (9)</span><i class="s"></i><svg class="k"><use href="#k"/></svg></div>
<div class="r"><i class="d"></i><svg class="c"><use href="#c"/></svg><svg class="i"><use href="#x"/></svg><span>拉伸 (10)</span><i class="s"></i><svg class="k"><use href="#k"/></svg></div>
<div class="r"><i class="d"></i><svg class="c"><use href="#c"/></svg><svg class="i"><use href="#x"/></svg><span>拉伸 (11)</span><i class="s"></i><svg class="k"><use href="#k"/></svg></div>
<div class="r"><i class="d"></i><svg class="c"><use href="#c"/></svg><svg class="i"><use href="#x"/></svg><span>拉伸 (12)</span><i class="s"></i><svg class="k"><use href="#k"/></svg></div>
<div class="r"><i class="d"></i><svg class="c"><use href="#c"/></svg><svg class="i"><use href="#x"/></svg><span>拉伸 (13)</span><i class="s"></i><svg class="k"><use href="#k"/></svg></div>
<div class="r"><i class="d"></i><svg class="c"><use href="#c"/></svg><svg class="i"><use href="#x"/></svg><span>拉伸 (14)</span><i class="s"></i><svg class="k"><use href="#k"/></svg></div>
<div class="r"><i class="d"></i><svg class="c"><use href="#c"/></svg><svg class="i"><use href="#u"/></svg><span>合并 (15)</span><i class="s"></i><svg class="k"><use href="#k"/></svg></div>
<div class="r"><i class="d"></i><svg class="c"><use href="#c"/></svg><svg class="i"><use href="#x"/></svg><span>拉伸 (16)</span><i class="s"></i><svg class="k"><use href="#k"/></svg></div>
<div class="r"><i class="d"></i><svg class="c"><use href="#c"/></svg><svg class="i"><use href="#x"/></svg><span>拉伸 (17)</span><i class="s"></i><svg class="k"><use href="#k"/></svg></div>
<div class="r"><i class="d"></i><svg class="c"><use href="#c"/></svg><svg class="i"><use href="#e"/></svg><span>替换面 (18)</span><i class="s"></i><svg class="k"><use href="#k"/></svg></div>
<div class="r"><i class="d"></i><svg class="c"><use href="#c"/></svg><svg class="i"><use href="#x"/></svg><span>拉伸 (19)</span><i class="s"></i><svg class="k"><use href="#k"/></svg></div>
<div class="r"><i class="d"></i><svg class="c"><use href="#c"/></svg><svg class="i"><use href="#sk"/></svg><span class="g">草图 (20) "SKETCH_...</span><i class="s"></i><svg class="k"><use href="#k"/></svg></div>
<div class="r"><i class="d"></i><svg class="c"><use href="#c"/></svg><svg class="i"><use href="#hs"/></svg><span>简单孔 (21)</span><i class="s"></i><svg class="k"><use href="#k"/></svg></div>
<div class="r"><i class="d"></i><svg class="c"><use href="#c"/></svg><svg class="i"><use href="#h"/></svg><span>沉头孔 (22)</span><i class="s"></i><svg class="k"><use href="#k"/></svg></div>
<div class="r"><i class="d"></i><svg class="c"><use href="#c"/></svg><svg class="i"><use href="#b"/></svg><span>边倒圆 (23)</span><i class="s"></i><svg class="k"><use href="#k"/></svg></div>
<div class="r"><i class="d"></i><svg class="c"><use href="#c"/></svg><svg class="i"><use href="#o"/></svg><span>偏置区域 (24)</span><i class="s"></i><svg class="k"><use href="#k"/></svg></div>
<div class="r"><i class="d"></i><svg class="c"><use href="#c"/></svg><svg class="i"><use href="#sub"/></svg><span>减去 (25)</span><i class="s"></i><svg class="k"><use href="#k"/></svg></div>
<div class="r"><i class="d"></i><svg class="c"><use href="#c"/></svg><svg class="i"><use href="#ht"/></svg><span>螺纹孔 (26)</span><i class="s"></i><svg class="k"><use href="#k"/></svg></div>
<div class="r"><i class="d"></i><svg class="c"><use href="#c"/></svg><svg class="i"><use href="#a"/></svg><span>倒斜角 (27)</span><i class="s"></i><svg class="k"><use href="#k"/></svg></div>
<div class="r"><i class="d"></i><svg class="c"><use href="#c"/></svg><svg class="i"><use href="#v"/></svg><span>旋转 (28)</span><i class="s"></i><svg class="k"><use href="#k"/></svg></div>
<div class="r"><i class="d"></i><svg class="c"><use href="#c"/></svg><svg class="i"><use href="#b"/></svg><span>边倒圆 (29)</span><i class="s"></i><svg class="k"><use href="#k"/></svg></div>
<div class="r"><i class="d"></i><svg class="c"><use href="#c"/></svg><svg class="i"><use href="#a"/></svg><span>倒斜角</span></div>
</div>

<!-- bottom sections -->
<div class="h" style="top:827px">相关性</div><div class="bar" style="top:846px"></div>
<div class="h" style="top:851px">细节</div><div class="bar" style="top:870px"></div>
<div class="h" style="top:875px">预览</div>
</div></body></html>
